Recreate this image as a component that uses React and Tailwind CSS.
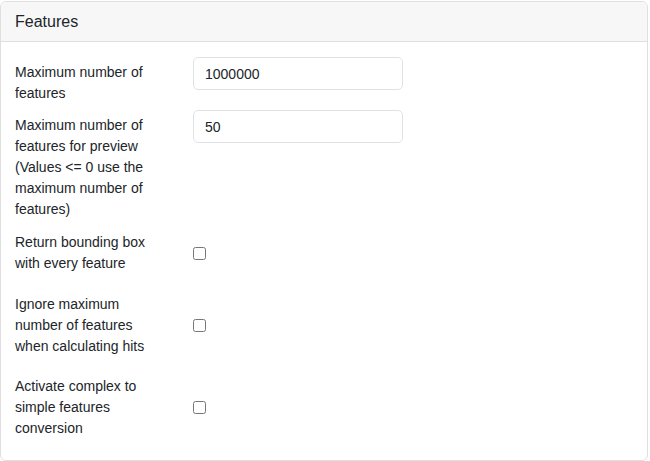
const FEATURE_FIELDS = [
  { id: 'max', label: 'Maximum number of features', type: 'number', value: '1000000', gap: 'mb-px' },
  {
    id: 'preview',
    label: 'Maximum number of features for preview (Values <= 0 use the maximum number of features)',
    type: 'number',
    value: '50',
    gap: 'mb-[2px]',
  },
  { id: 'bbox', label: 'Return bounding box with every feature', type: 'checkbox', gap: 'mb-[10px]' },
  { id: 'ignore', label: 'Ignore maximum number of features when calculating hits', type: 'checkbox', gap: 'mb-[9px]' },
  { id: 'complex', label: 'Activate complex to simple features conversion', type: 'checkbox', gap: 'mb-0' },
]

function FieldRow({ field }) {
  const isCheck = field.type === 'checkbox'
  return (
    <div className={`flex ${isCheck ? 'items-center' : 'items-start'} ${field.gap}`}>
      <label
        htmlFor={field.id}
        className="w-[150px] shrink-0 py-[5px] text-[14px] leading-[21px] text-[#212529]"
      >
        {field.label}
      </label>
      <div className="ml-[28px]">
        {isCheck ? (
          <input
            id={field.id}
            type="checkbox"
            className="block w-[13px] h-[13px] m-0"
          />
        ) : (
          <input
            id={field.id}
            type="text"
            defaultValue={field.value}
            className="block w-[210px] h-[33px] px-[11px] rounded-[5px] border border-[#dee2e6] bg-white text-[14px] text-[#212529] outline-none"
          />
        )}
      </div>
    </div>
  )
}

export default function App() {
  return (
    <div className="w-[650px] h-[461px] bg-white pt-px" style={{ fontFamily: '"Liberation Sans", Arial, sans-serif' }}>
      <div className="w-[648px] h-[460px] border border-[#dfdfdf] rounded-[6px] overflow-hidden">
        <div className="h-[40px] px-[14px] flex items-center bg-[#f7f7f8] border-b border-[#dfdfdf] text-[16px] text-[#212529]">
          Features
        </div>
        <div className="px-[14px] pt-[15px]">
          {FEATURE_FIELDS.map((field) => (
            <FieldRow key={field.id} field={field} />
          ))}
        </div>
      </div>
    </div>
  )
}
